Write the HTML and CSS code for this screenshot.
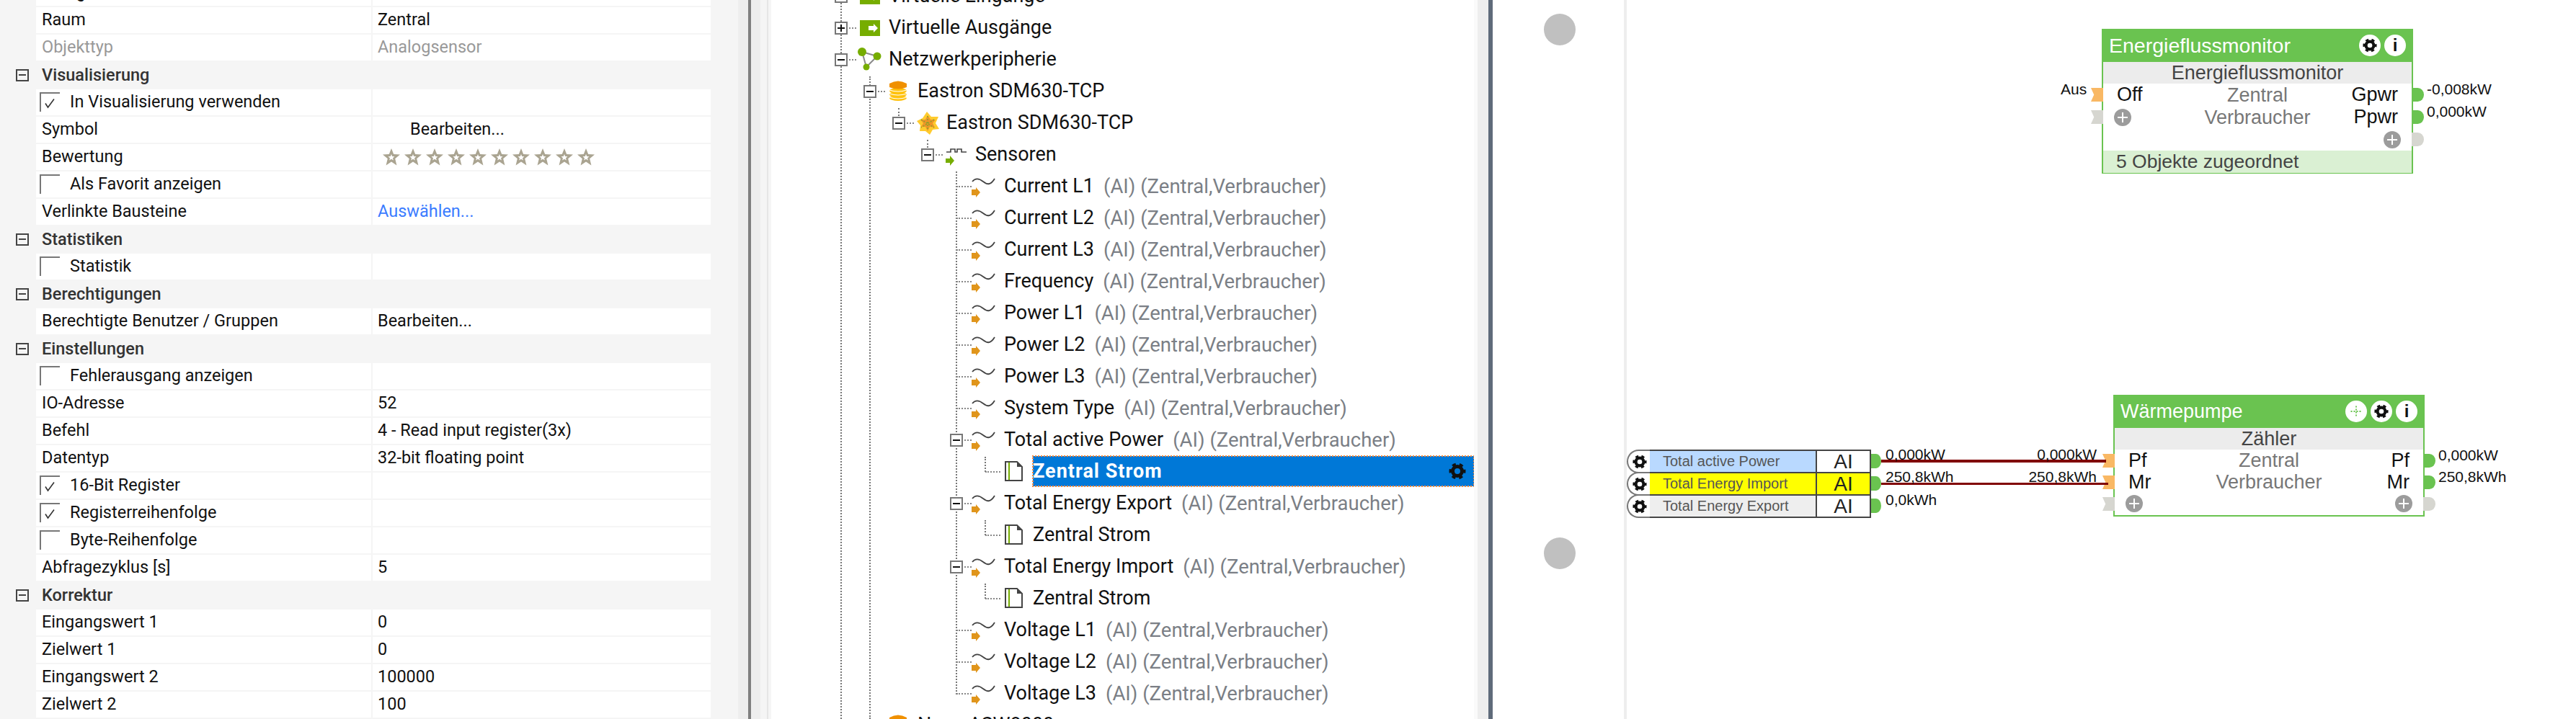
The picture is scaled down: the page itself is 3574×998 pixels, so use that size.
FILE: index.html
```html
<!DOCTYPE html>
<html lang="de">
<head>
    <meta charset="UTF-8">
    <title>Loxone Config</title>
    <link rel="stylesheet" href="styles.css">
</head>
<body>
    <svg class="sprites" width="0" height="0">
        <symbol id="ic-gear" viewBox="0 0 24 24">
            <circle cx="12" cy="12" r="6.5" fill="none" stroke="#111" stroke-width="5"/>
            <circle cx="12" cy="12" r="9.8" fill="none" stroke="#111" stroke-width="3.4" stroke-dasharray="5.1 5.16" stroke-dashoffset="2.5"/>
        </symbol>
        <symbol id="ic-star" viewBox="0 0 24 24">
            <polygon points="12,0 15.2,8 24,8.6 17.2,14.2 19.4,23.5 12,18.4 4.6,23.5 6.8,14.2 0,8.6 8.8,8" fill="#aaa491"/>
            <polygon points="12,8 13.2,11 16.4,11.2 14,13.4 14.8,16.6 12,14.8 9.2,16.6 10,13.4 7.6,11.2 10.8,11" fill="#fff"/>
        </symbol>
        <symbol id="ic-check" viewBox="0 0 16 16">
            <path d="M2 8.5 L5.5 14 L14 2.5" fill="none" stroke="#333" stroke-width="1.6"/>
        </symbol>
        <symbol id="ic-output" viewBox="0 0 36 36">
            <rect x="3" y="7" width="28" height="22" fill="#76ad00"/>
            <polygon points="15,15 22,15 22,12 28,18 22,24 22,21 15,21" fill="#fff"/>
        </symbol>
        <symbol id="ic-network" viewBox="0 0 36 36">
            <polygon points="6,7 27,13 12,28" fill="none" stroke="#8a8a8a" stroke-width="2"/>
            <circle cx="6" cy="7" r="6" fill="#76ad00"/>
            <circle cx="27" cy="13" r="5.5" fill="#76ad00"/>
            <circle cx="12" cy="28" r="4.5" fill="#76ad00"/>
        </symbol>
        <symbol id="ic-db" viewBox="0 0 36 36">
            <ellipse cx="16" cy="22" rx="12" ry="4" fill="#ffc20e"/>
            <ellipse cx="16" cy="27" rx="12" ry="4" fill="#ffc20e"/>
            <path d="M4 26 Q16 30 28 26" fill="none" stroke="#fff" stroke-width="1.2"/>
            <ellipse cx="16" cy="17" rx="12" ry="4" fill="#ffc20e"/>
            <path d="M4 21 Q16 25 28 21" fill="none" stroke="#fff" stroke-width="1.2"/>
            <path d="M4 16 Q16 20 28 16" fill="none" stroke="#fff" stroke-width="1.2"/>
            <path d="M4 7 Q16 0 28 7 V12 Q16 17 4 12 Z" fill="#f09000"/>
        </symbol>
        <symbol id="ic-device" viewBox="0 0 36 36">
            <polygon points="16,2 22,9 32,9 28,18 33,26 24,27 20,34 14,29 6,29 7,21 2,15 10,11" fill="#ffcb2e"/>
            <polygon points="17,7 21,13 28,13 24,18 27,24 20,23 17,29 14,23 8,23 11,18 7,13 14,13" fill="#ee9528"/>
            <path d="M17 8 V28 M8 13 L26 24 M26 13 L8 24" stroke="#8aa32a" stroke-width="1.5" stroke-dasharray="2 2"/>
        </symbol>
        <symbol id="ic-pulse" viewBox="0 0 36 36">
            <path d="M3 14 H9 V10 H15 V14 H18 V10 H24 V14 H31" fill="none" stroke="#444" stroke-width="1.6"/>
            <polygon points="2,23 8,23 8,19 14,26 8,33 8,29 2,29" fill="#76ad00"/>
        </symbol>
        <symbol id="ic-sensor" viewBox="0 0 36 36">
            <path d="M1 11 C6 5 11 7 16 11 S 26 17 32 7" fill="none" stroke="#444" stroke-width="1.8"/>
            <polygon points="0,22 6,22 6,19 12,26 6,33 6,30 0,30" fill="#e0951b"/>
        </symbol>
        <symbol id="ic-doc" viewBox="0 0 36 36">
            <path d="M5 4 H21 L28 11 V30 H5 Z" fill="#fff" stroke="#444" stroke-width="2"/>
            <polygon points="21,4 28,11 21,11" fill="#444"/>
            <rect x="9" y="5" width="2" height="24" fill="#76ad00"/>
        </symbol>
    </svg>

    <!-- Eigenschaften -->
    <aside class="props">
        <div class="prop"><div class="prop-name">Kategorie</div><div class="prop-value"></div></div>
        <div class="prop"><div class="prop-name">Raum</div><div class="prop-value">Zentral</div></div>
        <div class="prop muted"><div class="prop-name">Objekttyp</div><div class="prop-value">Analogsensor</div></div>

        <div class="section"><span class="toggle"></span>Visualisierung</div>
        <div class="prop"><div class="prop-name"><span class="checkbox"><svg><use href="#ic-check"/></svg></span>In Visualisierung verwenden</div><div class="prop-value"></div></div>
        <div class="prop"><div class="prop-name">Symbol</div><div class="prop-value prop-symbol">Bearbeiten...</div></div>
        <div class="prop"><div class="prop-name">Bewertung</div><div class="prop-value stars">
            <svg><use href="#ic-star"/></svg><svg><use href="#ic-star"/></svg><svg><use href="#ic-star"/></svg><svg><use href="#ic-star"/></svg><svg><use href="#ic-star"/></svg><svg><use href="#ic-star"/></svg><svg><use href="#ic-star"/></svg><svg><use href="#ic-star"/></svg><svg><use href="#ic-star"/></svg><svg><use href="#ic-star"/></svg>
        </div></div>
        <div class="prop"><div class="prop-name"><span class="checkbox"></span>Als Favorit anzeigen</div><div class="prop-value"></div></div>
        <div class="prop"><div class="prop-name">Verlinkte Bausteine</div><div class="prop-value link">Auswählen...</div></div>

        <div class="section"><span class="toggle"></span>Statistiken</div>
        <div class="prop"><div class="prop-name"><span class="checkbox"></span>Statistik</div><div class="prop-value"></div></div>

        <div class="section"><span class="toggle"></span>Berechtigungen</div>
        <div class="prop"><div class="prop-name">Berechtigte Benutzer / Gruppen</div><div class="prop-value">Bearbeiten...</div></div>

        <div class="section"><span class="toggle"></span>Einstellungen</div>
        <div class="prop"><div class="prop-name"><span class="checkbox"></span>Fehlerausgang anzeigen</div><div class="prop-value"></div></div>
        <div class="prop"><div class="prop-name">IO-Adresse</div><div class="prop-value">52</div></div>
        <div class="prop"><div class="prop-name">Befehl</div><div class="prop-value">4 - Read input register(3x)</div></div>
        <div class="prop"><div class="prop-name">Datentyp</div><div class="prop-value">32-bit floating point</div></div>
        <div class="prop"><div class="prop-name"><span class="checkbox"><svg><use href="#ic-check"/></svg></span>16-Bit Register</div><div class="prop-value"></div></div>
        <div class="prop"><div class="prop-name"><span class="checkbox"><svg><use href="#ic-check"/></svg></span>Registerreihenfolge</div><div class="prop-value"></div></div>
        <div class="prop"><div class="prop-name"><span class="checkbox"></span>Byte-Reihenfolge</div><div class="prop-value"></div></div>
        <div class="prop"><div class="prop-name">Abfragezyklus [s]</div><div class="prop-value">5</div></div>

        <div class="section"><span class="toggle"></span>Korrektur</div>
        <div class="prop"><div class="prop-name">Eingangswert 1</div><div class="prop-value">0</div></div>
        <div class="prop"><div class="prop-name">Zielwert 1</div><div class="prop-value">0</div></div>
        <div class="prop"><div class="prop-name">Eingangswert 2</div><div class="prop-value">100000</div></div>
        <div class="prop"><div class="prop-name">Zielwert 2</div><div class="prop-value">100</div></div>
    </aside>

    <div class="splitter-left"></div>

    <!-- Peripheriebaum -->
    <main class="tree">
        <div class="guide g0"></div>
        <div class="guide g1"></div>
        <div class="guide g2"></div>
        <div class="guide g3"></div>
        <div class="guide g4"></div>
        <div class="guide s1"></div>
        <div class="guide s2"></div>
        <div class="guide s3"></div>

        <div class="node l0"><span class="slot"><span class="exp plus"></span></span><svg class="icon"><use href="#ic-output"/></svg><span class="label">Virtuelle Eingänge</span></div>
        <div class="node l0"><span class="slot"><span class="exp plus"></span></span><svg class="icon"><use href="#ic-output"/></svg><span class="label">Virtuelle Ausgänge</span></div>
        <div class="node l0"><span class="slot"><span class="exp"></span></span><svg class="icon"><use href="#ic-network"/></svg><span class="label">Netzwerkperipherie</span></div>
        <div class="node l1"><span class="slot"><span class="exp"></span></span><svg class="icon"><use href="#ic-db"/></svg><span class="label">Eastron SDM630-TCP</span></div>
        <div class="node l2"><span class="slot"><span class="exp"></span></span><svg class="icon"><use href="#ic-device"/></svg><span class="label">Eastron SDM630-TCP</span></div>
        <div class="node l3"><span class="slot"><span class="exp"></span></span><svg class="icon"><use href="#ic-pulse"/></svg><span class="label">Sensoren</span></div>
        <div class="node l4"><span class="slot"></span><svg class="icon"><use href="#ic-sensor"/></svg><span class="label">Current L1</span><span class="note">(AI) (Zentral,Verbraucher)</span></div>
        <div class="node l4"><span class="slot"></span><svg class="icon"><use href="#ic-sensor"/></svg><span class="label">Current L2</span><span class="note">(AI) (Zentral,Verbraucher)</span></div>
        <div class="node l4"><span class="slot"></span><svg class="icon"><use href="#ic-sensor"/></svg><span class="label">Current L3</span><span class="note">(AI) (Zentral,Verbraucher)</span></div>
        <div class="node l4"><span class="slot"></span><svg class="icon"><use href="#ic-sensor"/></svg><span class="label">Frequency</span><span class="note">(AI) (Zentral,Verbraucher)</span></div>
        <div class="node l4"><span class="slot"></span><svg class="icon"><use href="#ic-sensor"/></svg><span class="label">Power L1</span><span class="note">(AI) (Zentral,Verbraucher)</span></div>
        <div class="node l4"><span class="slot"></span><svg class="icon"><use href="#ic-sensor"/></svg><span class="label">Power L2</span><span class="note">(AI) (Zentral,Verbraucher)</span></div>
        <div class="node l4"><span class="slot"></span><svg class="icon"><use href="#ic-sensor"/></svg><span class="label">Power L3</span><span class="note">(AI) (Zentral,Verbraucher)</span></div>
        <div class="node l4"><span class="slot"></span><svg class="icon"><use href="#ic-sensor"/></svg><span class="label">System Type</span><span class="note">(AI) (Zentral,Verbraucher)</span></div>
        <div class="node l4"><span class="slot"><span class="exp"></span></span><svg class="icon"><use href="#ic-sensor"/></svg><span class="label">Total active Power</span><span class="note">(AI) (Zentral,Verbraucher)</span></div>
        <div class="node l5 selected"><span class="slot"></span><svg class="icon"><use href="#ic-doc"/></svg><span class="label">Zentral Strom<svg class="row-gear"><use href="#ic-gear"/></svg></span></div>
        <div class="node l4"><span class="slot"><span class="exp"></span></span><svg class="icon"><use href="#ic-sensor"/></svg><span class="label">Total Energy Export</span><span class="note">(AI) (Zentral,Verbraucher)</span></div>
        <div class="node l5"><span class="slot"></span><svg class="icon"><use href="#ic-doc"/></svg><span class="label">Zentral Strom</span></div>
        <div class="node l4"><span class="slot"><span class="exp"></span></span><svg class="icon"><use href="#ic-sensor"/></svg><span class="label">Total Energy Import</span><span class="note">(AI) (Zentral,Verbraucher)</span></div>
        <div class="node l5"><span class="slot"></span><svg class="icon"><use href="#ic-doc"/></svg><span class="label">Zentral Strom</span></div>
        <div class="node l4"><span class="slot"></span><svg class="icon"><use href="#ic-sensor"/></svg><span class="label">Voltage L1</span><span class="note">(AI) (Zentral,Verbraucher)</span></div>
        <div class="node l4"><span class="slot"></span><svg class="icon"><use href="#ic-sensor"/></svg><span class="label">Voltage L2</span><span class="note">(AI) (Zentral,Verbraucher)</span></div>
        <div class="node l4"><span class="slot"></span><svg class="icon"><use href="#ic-sensor"/></svg><span class="label">Voltage L3</span><span class="note">(AI) (Zentral,Verbraucher)</span></div>
        <div class="node l1"><span class="slot"></span><svg class="icon"><use href="#ic-db"/></svg><span class="label">Nano ASW8000</span></div>
    </main>

    <div class="splitter-right"></div>

    <!-- Zeichenfläche -->
    <section class="canvas">
        <div class="page-rule"></div>
        <div class="anchor a1"></div>
        <div class="anchor a2"></div>

        <div class="block block-monitor">
            <div class="block-head">
                <span class="block-title">Energieflussmonitor</span>
                <span class="block-tools">
                    <span class="tool"><svg><use href="#ic-gear"/></svg></span>
                    <span class="tool tool-info">i</span>
                </span>
            </div>
            <div class="block-sub">Energieflussmonitor</div>
            <div class="block-body">
                <div class="io">
                    <span class="port in on"></span><span class="val val-in">Aus</span>
                    <span class="pin">Off</span><span class="place">Zentral</span><span class="pin right">Gpwr</span>
                    <span class="port out on"></span><span class="val val-out">-0,008kW</span>
                </div>
                <div class="io">
                    <span class="port in"></span>
                    <span class="pin"><span class="add"></span></span><span class="place">Verbraucher</span><span class="pin right">Ppwr</span>
                    <span class="port out on"></span><span class="val val-out">0,000kW</span>
                </div>
                <div class="io">
                    <span class="pin"></span><span class="place"></span><span class="pin right"><span class="add"></span></span>
                    <span class="port out"></span>
                </div>
            </div>
            <div class="block-foot">5 Objekte zugeordnet</div>
        </div>

        <div class="objects">
            <div class="obj">
                <span class="obj-cap"><svg><use href="#ic-gear"/></svg></span>
                <span class="obj-name power">Total active Power</span><span class="obj-type">AI</span>
                <span class="port out on"></span>
            </div>
            <div class="obj">
                <span class="obj-cap"><svg><use href="#ic-gear"/></svg></span>
                <span class="obj-name marked">Total Energy Import</span><span class="obj-type marked">AI</span>
                <span class="port out on"></span>
            </div>
            <div class="obj last">
                <span class="obj-cap"><svg><use href="#ic-gear"/></svg></span>
                <span class="obj-name">Total Energy Export</span><span class="obj-type">AI</span>
                <span class="port out on"></span><span class="val val-out">0,0kWh</span>
            </div>
        </div>

        <div class="block block-pump">
            <div class="block-head">
                <span class="block-title">Wärmepumpe</span>
                <span class="block-tools">
                    <span class="tool tool-move"><svg viewBox="0 0 24 24"><path d="M12 3 V21 M3 12 H21" stroke="#6ac350" stroke-width="2.2" stroke-dasharray="2.4 2.4"/></svg></span>
                    <span class="tool"><svg><use href="#ic-gear"/></svg></span>
                    <span class="tool tool-info">i</span>
                </span>
            </div>
            <div class="block-sub">Zähler</div>
            <div class="block-body">
                <div class="io">
                    <span class="port in on"></span>
                    <span class="pin">Pf</span><span class="place">Zentral</span><span class="pin right">Pf</span>
                    <span class="port out on"></span><span class="val val-out">0,000kW</span>
                </div>
                <div class="io">
                    <span class="port in on"></span>
                    <span class="pin">Mr</span><span class="place">Verbraucher</span><span class="pin right">Mr</span>
                    <span class="port out on"></span><span class="val val-out">250,8kWh</span>
                </div>
                <div class="io">
                    <span class="port in"></span>
                    <span class="pin"><span class="add"></span></span><span class="place"></span><span class="pin right"><span class="add"></span></span>
                    <span class="port out"></span>
                </div>
            </div>
        </div>

        <div class="wire wire-power"><span class="wire-val from">0,000kW</span><span class="wire-val to">0,000kW</span></div>
        <div class="wire wire-energy"><span class="wire-val from">250,8kWh</span><span class="wire-val to">250,8kWh</span></div>
    </section>
</body>
</html>
```

FILE: styles.css
```css
* {
    box-sizing: border-box;
}

html, body {
    margin: 0;
    padding: 0;
    height: 998px;
    overflow: hidden;
}

body {
    display: flex;
    width: 3574px;
    background-color: #fff;
    font-family: Roboto, "Noto Sans", sans-serif;
    color: #111;
}

.sprites {
    position: absolute;
}

/* Properties panel */
.props {
    width: 1024px;
    height: 998px;
    overflow: hidden;
    flex: none;
    background-color: #f5f5f5;
    padding: 0 38px 0 0;
    font-size: 23.5px;
}

.prop {
    display: flex;
    height: 36px;
    margin-left: 50px;
    background-color: #fff;
}

.prop:first-child {
    margin-top: -28px;
}

.prop + .prop {
    margin-top: 2px;
}

.prop-name {
    display: flex;
    align-items: center;
    width: 467px;
    padding: 0 0 2px 8px;
    border-right: 2px solid #f5f5f5;
}

.prop-value {
    display: flex;
    align-items: center;
    flex: 1;
    padding: 0 0 2px 7px;
}

.prop-symbol {
    padding-left: 52px;
}

.muted {
    color: #999;
}

.link {
    color: #3b7cff;
}

.stars {
    gap: 6px;
    padding: 0 0 0 14px;
}

.stars svg {
    width: 24px;
    height: 24px;
}

.section {
    display: flex;
    align-items: center;
    height: 40px;
    font-weight: 500;
    color: #333;
}

.toggle {
    position: relative;
    width: 18px;
    height: 17px;
    margin: 0 18px 0 22px;
    border: 2px solid #444;
}

.toggle::before {
    content: "";
    position: absolute;
    left: 2px;
    right: 2px;
    top: 5px;
    height: 2px;
    background-color: #444;
}

.checkbox {
    display: flex;
    align-items: center;
    justify-content: center;
    width: 28px;
    height: 27px;
    margin: 0 14px 0 -3px;
    padding: 2px 6px 0 3px;
    border-top: 2px solid #777;
    border-left: 2px solid #777;
}

.checkbox svg {
    width: 16px;
    height: 16px;
}

/* Splitters */
.splitter-left {
    flex: none;
    width: 46px;
    background: linear-gradient(to right, #eee 0 14px, #808080 14px 18px, #eee 18px 31px, #f5f5f5 31px 40px, #e6e6e6 40px 42px, #f5f5f5 42px);
}

.splitter-right {
    flex: none;
    width: 26px;
    background: linear-gradient(to right, #fafafa 0 5px, #eee 5px 20px, #5f6b7a 20px);
}

/* Tree */
.tree {
    position: relative;
    flex: none;
    width: 975px;
    height: 998px;
    overflow: hidden;
    font-size: 27px;
}

.node {
    position: relative;
    display: flex;
    align-items: center;
    height: 44px;
    white-space: nowrap;
}

.node:nth-of-type(9) {
    margin-top: -27px;
}

.l0 { padding-left: 88px; }
.l1 { padding-left: 128px; }
.l2 { padding-left: 168px; }
.l3 { padding-left: 208px; }
.l4 { padding-left: 248px; }
.l5 { padding-left: 288px; }

.slot {
    position: relative;
    flex: none;
    width: 18px;
    height: 18px;
    margin-right: 14px;
}

.slot::after {
    content: "";
    position: absolute;
    left: 9px;
    top: 8px;
    width: 21px;
    border-top: 2px dotted #888;
}

.exp {
    position: absolute;
    z-index: 1;
    left: 0;
    top: 0;
    width: 18px;
    height: 18px;
    background-color: #fff;
    border: 2px solid #777;
}

.exp::before {
    content: "";
    position: absolute;
    left: 2px;
    right: 2px;
    top: 6px;
    height: 2px;
    background-color: #111;
}

.exp.plus::after {
    content: "";
    position: absolute;
    top: 2px;
    bottom: 2px;
    left: 6px;
    width: 2px;
    background-color: #111;
}

.icon {
    flex: none;
    width: 36px;
    height: 36px;
    margin-right: 7px;
}

.l4 .icon {
    margin-left: -2px;
    margin-right: 9px;
}

.label,
.note {
    position: relative;
    top: -1px;
}

.note {
    margin-left: 13px;
    color: #7b7f86;
    font-size: 27.5px;
}

.selected .label {
    top: 0;
    display: flex;
    align-items: center;
    justify-content: space-between;
    flex: 1;
    height: 42px;
    margin-top: -2px;
    padding-right: 11px;
    background-color: #0078d7;
    outline: 2px dotted #ff8a3c;
    outline-offset: -1px;
    color: #fff;
    font-weight: 700;
    letter-spacing: 1px;
}

.row-gear {
    width: 24px;
    height: 24px;
}

.guide {
    position: absolute;
    border-left: 2px dotted #777;
}

.g0 { left: 96px; top: 0; height: 998px; }
.g1 { left: 136px; top: 106px; height: 892px; }
.g2 { left: 176px; top: 150px; height: 11px; }
.g3 { left: 216px; top: 194px; height: 11px; }
.g4 { left: 256px; top: 238px; height: 726px; }
.s1 { left: 296px; top: 634px; height: 21px; }
.s2 { left: 296px; top: 722px; height: 21px; }
.s3 { left: 296px; top: 810px; height: 21px; }

/* Canvas */
.canvas {
    position: relative;
    flex: 1;
    height: 998px;
    font-family: "Liberation Sans", sans-serif;
}

.page-rule {
    position: absolute;
    left: 182px;
    top: 0;
    bottom: 0;
    width: 4px;
    background-color: #eee;
}

.anchor {
    position: absolute;
    left: 71px;
    width: 44px;
    height: 44px;
    border-radius: 50%;
    background-color: #c0c0c0;
}

.a1 { top: 19px; }
.a2 { top: 746px; }

.block {
    position: absolute;
    width: 432px;
    border: 2px solid #6ac350;
    background-color: #fff;
}

.block-monitor {
    left: 845px;
    top: 40px;
    height: 201px;
}

.block-pump {
    left: 861px;
    top: 548px;
    height: 169px;
}

.block-head {
    display: flex;
    align-items: center;
    justify-content: space-between;
    height: 46px;
    margin: -2px -2px 0;
    padding: 0 10px;
    background-color: #6ac350;
    color: #fff;
    font-size: 27px;
}

.block-monitor .block-head {
    font-size: 28.5px;
}

.block-tools {
    display: flex;
    gap: 5px;
}

.tool {
    display: flex;
    align-items: center;
    justify-content: center;
    width: 30px;
    height: 30px;
    border-radius: 50%;
    background-color: #fff;
    color: #111;
    font-size: 24px;
    font-weight: 700;
}

.tool svg {
    width: 20px;
    height: 20px;
}

.block-sub {
    height: 30px;
    background-color: #ececec;
    color: #444;
    font-size: 27px;
    line-height: 30px;
    text-align: center;
}

.block-body {
    display: flex;
    flex-direction: column;
}

.io {
    position: relative;
    display: grid;
    grid-template-columns: 1fr auto 1fr;
    align-items: center;
    height: 30px;
    padding: 0 19px;
    font-size: 27px;
}

.block-monitor .io {
    height: 31px;
}

.pin.right {
    display: flex;
    justify-content: flex-end;
}

.place {
    color: #777;
}

.block-monitor .place {
    position: relative;
    top: 1px;
}

.add {
    position: relative;
    display: block;
    width: 24px;
    height: 24px;
    margin: 0 -4px;
    border-radius: 50%;
    background-color: #9c9c9c;
}

.add::before,
.add::after {
    content: "";
    position: absolute;
    background-color: #fff;
}

.add::before {
    left: 5px;
    right: 5px;
    top: 11px;
    height: 2px;
}

.add::after {
    top: 5px;
    bottom: 5px;
    left: 11px;
    width: 2px;
}

.port {
    position: absolute;
    top: 6px;
    width: 17px;
    height: 19px;
    background-color: #d6d6d0;
}

.port.in {
    left: -17px;
    clip-path: polygon(0 0, 100% 0, 100% 100%, 0 100%, 25% 50%);
}

.port.out {
    right: -17px;
    border-radius: 0 50% 50% 0;
}

.port.in.on {
    background-color: #f9b864;
}

.port.out.on {
    background-color: #6ac350;
}

.val {
    position: absolute;
    top: -2px;
    font-size: 21px;
    line-height: 20px;
    white-space: nowrap;
}

.val-in {
    left: -59px;
}

.val-out {
    left: calc(100% + 21px);
}

.block-foot {
    height: 31px;
    padding-left: 18px;
    background-color: #daf0d3;
    color: #444;
    font-size: 26.5px;
    line-height: 31px;
}

/* Objects on the canvas */
.objects {
    position: absolute;
    left: 186px;
    top: 624px;
    width: 339px;
}

.obj {
    position: relative;
    display: flex;
    height: 31px;
}

.obj.last {
    height: 33px;
}

.obj-cap {
    display: flex;
    align-items: center;
    justify-content: center;
    flex: none;
    width: 32px;
    height: 33px;
    padding-left: 2px;
    background-color: #fff;
    border: 2px solid #777;
    border-right: none;
    border-radius: 17px 0 0 17px;
}

.obj-cap svg {
    width: 20px;
    height: 20px;
}

.obj-name {
    flex: 1;
    padding-left: 18px;
    border-top: 2px solid #444;
    background-color: #eee;
    color: #555;
    font-size: 20px;
    line-height: 29px;
}

.obj-type {
    flex: none;
    width: 77px;
    border: 2px solid #444;
    border-bottom: none;
    background-color: #fff;
    color: #222;
    font-size: 28px;
    line-height: 29px;
    text-align: center;
}

.last .obj-name,
.last .obj-type {
    border-bottom: 2px solid #444;
}

.power {
    background-color: #b9d9ff;
}

.marked {
    background-color: #ff0;
}

.objects .port.out {
    top: 6px;
    right: -14px;
    width: 14px;
    height: 20px;
}

.objects .val-out {
    top: -2px;
    left: calc(100% + 20px);
}

/* Wires */
.wire {
    position: absolute;
    left: 539px;
    background-color: #800000;
}

.wire-power {
    top: 638px;
    width: 312px;
    height: 4px;
}

.wire-energy {
    top: 670px;
    width: 315px;
    height: 3px;
}

.wire-val {
    position: absolute;
    bottom: 1px;
    font-size: 21px;
    line-height: 20px;
    white-space: nowrap;
}

.wire-val.from {
    left: 6px;
}

.wire-val.to {
    right: 13px;
}

.wire-energy .wire-val.to {
    right: 16px;
}
```
